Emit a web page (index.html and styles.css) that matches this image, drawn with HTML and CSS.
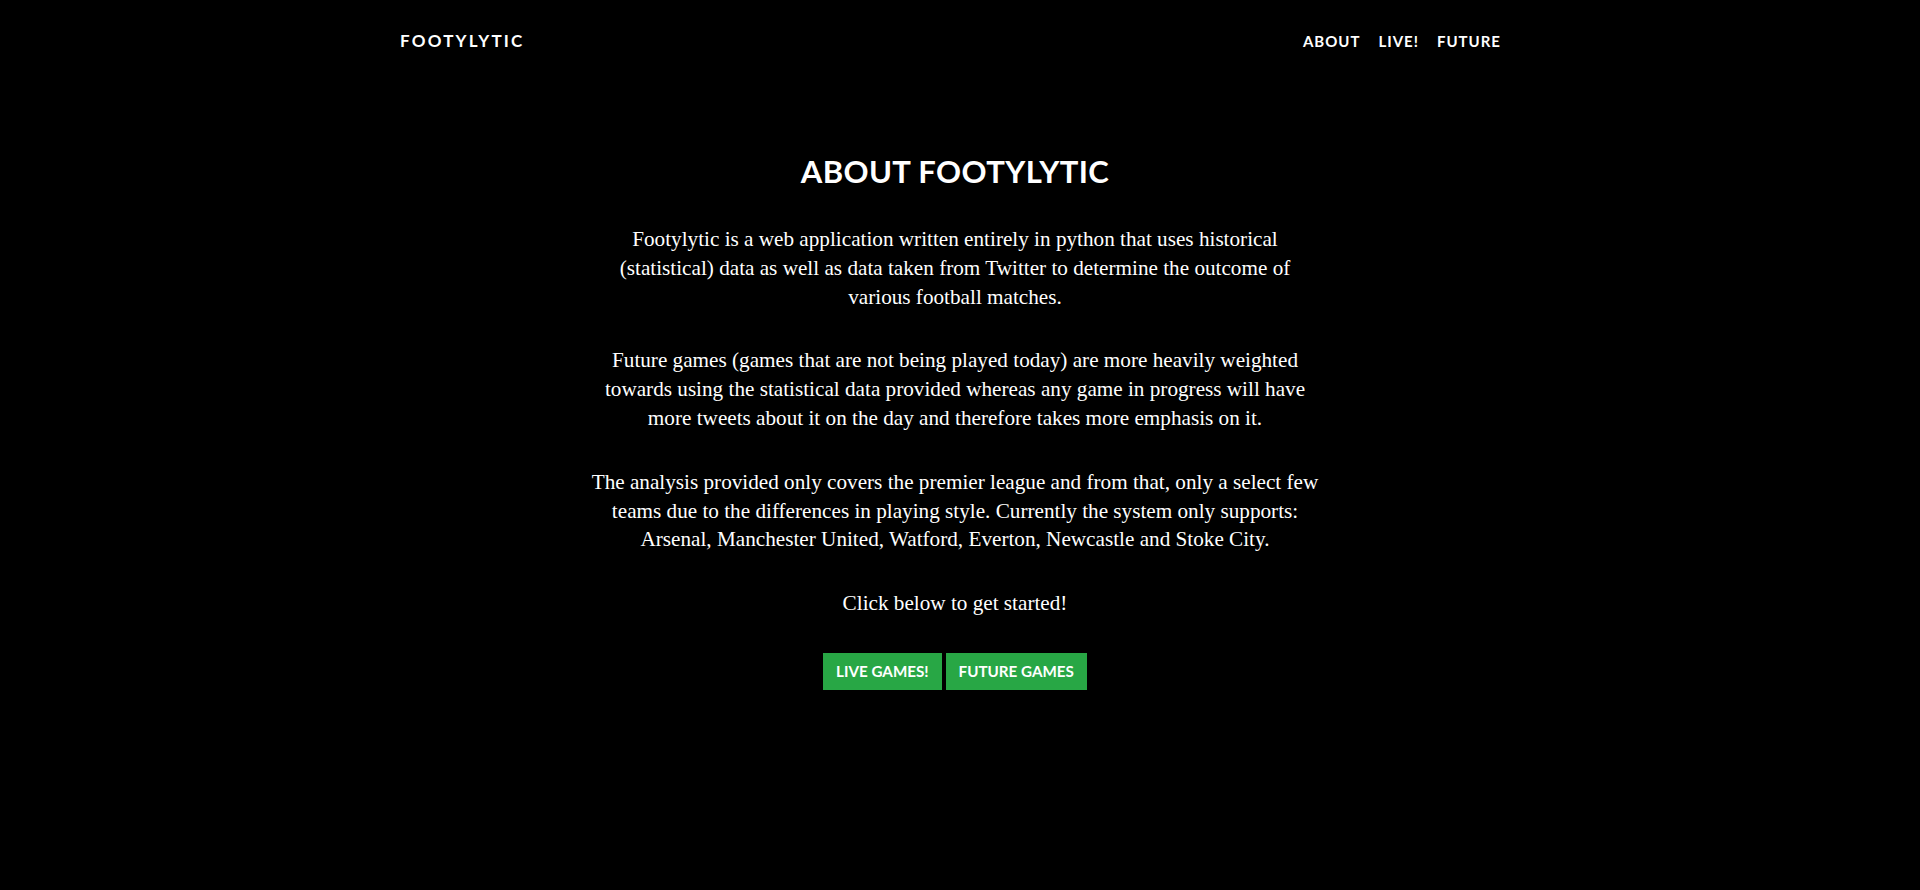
FILE: index.html
```html
<!DOCTYPE html>
<html lang="en">
<head>
<meta charset="utf-8">
<title>Footylytic</title>
<link rel="stylesheet" href="styles.css">
</head>
<body>
<header class="navbar">
  <div class="nav-inner">
    <a class="brand" href="#">Footylytic</a>
    <nav class="nav-links">
      <a href="#">About</a>
      <a href="#">Live!</a>
      <a href="#">Future</a>
    </nav>
  </div>
</header>
<main class="about">
  <div class="about-col">
    <h2 class="title">About Footylytic</h2>
    <p>Footylytic is a web application written entirely in python that uses historical<br>(statistical) data as well as data taken from Twitter to determine the outcome of<br>various football matches.</p>
    <p>Future games (games that are not being played today) are more heavily weighted<br>towards using the statistical data provided whereas any game in progress will have<br>more tweets about it on the day and therefore takes more emphasis on it.</p>
    <p>The analysis provided only covers the premier league and from that, only a select few<br>teams due to the differences in playing style. Currently the system only supports:<br>Arsenal, Manchester United, Watford, Everton, Newcastle and Stoke City.</p>
    <p>Click below to get started!</p>
    <div class="actions">
      <a class="btn" href="#">Live Games!</a>
      <a class="btn" href="#">Future Games</a>
    </div>
  </div>
</main>
</body>
</html>
```

FILE: styles.css
```css
html, body {
  margin: 0;
  padding: 0;
  background: #000;
  color: #fff;
}
body {
  font-family: "Liberation Serif", serif;
  font-size: 21.2px;
  line-height: 28.8px;
  min-height: 890px;
}
a {
  color: #fff;
  text-decoration: none;
}
.navbar {
  padding-top: 29px;
}
.nav-inner {
  width: 1101px;
  margin: 0 0 0 400px;
  display: flex;
  justify-content: space-between;
  align-items: center;
  height: 24px;
}
.brand {
  font-family: "Lato", sans-serif;
  font-weight: 700;
  font-size: 17px;
  letter-spacing: 2.2px;
  text-transform: uppercase;
}
.nav-links {
  display: flex;
  gap: 18px;
}
.nav-links a {
  font-family: "Lato", sans-serif;
  font-weight: 700;
  font-size: 15px;
  letter-spacing: 1px;
  text-transform: uppercase;
}
.about {
  display: flex;
  justify-content: center;
  padding: 99px 10px 0 0;
}
.about-col {
  width: 780px;
  text-align: center;
}
.title {
  font-family: "Lato", sans-serif;
  font-weight: 700;
  font-size: 31px;
  line-height: 38px;
  letter-spacing: 0.4px;
  text-transform: uppercase;
  margin: 0 0 35px;
}
.about-col p {
  margin: 0 0 35px;
}
.actions {
  display: flex;
  justify-content: center;
  gap: 4px;
}
.btn {
  display: block;
  background: #28a745;
  color: #fff;
  font-family: "Lato", sans-serif;
  font-weight: 700;
  font-size: 15.2px;
  line-height: 25px;
  padding: 6px 13px;
  text-transform: uppercase;
}
```
